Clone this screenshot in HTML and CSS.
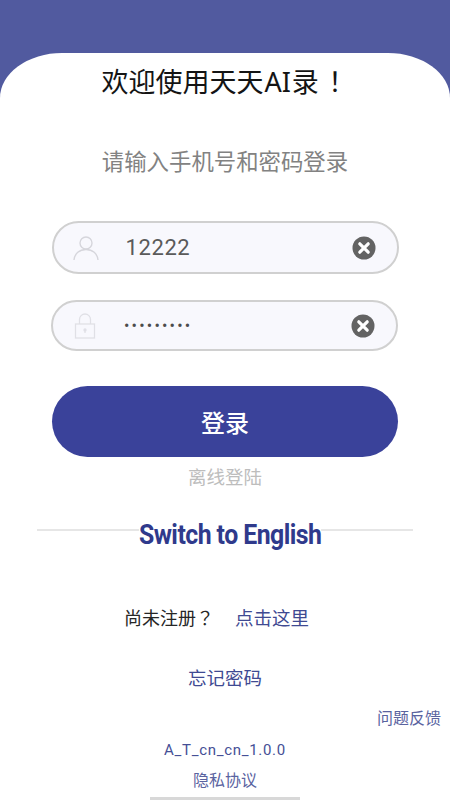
FILE: index.html
```html
<!DOCTYPE html>
<html lang="zh">
<head>
<meta charset="utf-8">
<title>天天AI录</title>
<link rel="stylesheet" href="styles.css">
</head>
<body>
<div class="screen">
  <main class="sheet">
    <h1 class="title">欢迎使用天天<span class="latin">AI</span>录<span class="fw">！</span></h1>
    <p class="subtitle">请输入手机号和密码登录</p>

    <div class="field field-user">
      <svg class="field-icon" viewBox="0 0 26 26" width="26" height="26" fill="none" stroke="#d6d6dc" stroke-width="1.4">
        <circle cx="13" cy="8" r="6"/>
        <path d="M1 25c.6-6.500 5.500-10.500 12-10.500S24.400 18.500 25 25"/>
      </svg>
      <span class="field-value">12222</span>
      <svg class="clear" viewBox="0 0 24 24" width="24" height="24">
        <circle cx="12" cy="12" r="11.500" fill="#636363"/>
        <path d="M7.800 7.800l8.400 8.400M16.200 7.800l-8.400 8.400" stroke="#fff" stroke-width="3.200" stroke-linecap="round"/>
      </svg>
    </div>

    <div class="field field-pass">
      <svg class="field-icon" viewBox="0 0 22 26" width="22" height="26" fill="none" stroke="#e0e0e6" stroke-width="1.300">
        <rect x="1.500" y="11" width="19" height="14"/>
        <path d="M5.500 11V6.500a5.500 5.500 0 0 1 11 0V11"/>
        <circle cx="11" cy="17" r="1" fill="#e0e0e6"/>
        <path d="M11 17v3"/>
      </svg>
      <span class="field-value dots">•••••••••</span>
      <svg class="clear" viewBox="0 0 24 24" width="24" height="24">
        <circle cx="12" cy="12" r="11.500" fill="#636363"/>
        <path d="M7.800 7.800l8.400 8.400M16.200 7.800l-8.400 8.400" stroke="#fff" stroke-width="3.200" stroke-linecap="round"/>
      </svg>
    </div>

    <button class="login" type="button">登录</button>
    <div class="offline">离线登陆</div>

    <div class="switch-row">
      <span class="switch">Switch to English</span>
    </div>

    <div class="register"><span class="register-q">尚未注册<span class="fw">？</span></span><a class="register-link">点击这里</a></div>
    <div class="forgot">忘记密码</div>
    <div class="feedback">问题反馈</div>
    <div class="version">A_T_cn_cn_1.0.0</div>
    <div class="privacy">隐私协议</div>
    <div class="home-bar"></div>
  </main>
</div>
</body>
</html>
```

FILE: styles.css
```css
* { box-sizing: border-box; }
html, body { margin: 0; padding: 0; height: 100%; }
body {
  font-family: "Noto Sans CJK SC", "Noto Sans", sans-serif;
  overflow: hidden;
}
.screen {
  width: 450px;
  height: 800px;
  padding-top: 53px;
  background: #515a9f;
}
.sheet {
  height: 747px;
  background: #fff;
  border-radius: 62px 62px 0 0 / 45px 45px 0 0;
  display: flex;
  flex-direction: column;
  align-items: center;
}
.title {
  margin: 9px 0 0 0;
  height: 38px;
  font-size: 27px;
  line-height: 38px;
  font-weight: 400;
  color: #141414;
  white-space: nowrap;
}
.latin { margin: 0 1px; font-family: "Noto Sans", sans-serif; }
.fw {
  display: inline-block;
  width: 1em;
  line-height: 1;
  text-align: center;
  margin-left: 0.1em;
  font-family: "Noto Sans CJK TC", sans-serif;
}
.subtitle {
  margin: 44px 0 0 0;
  font-size: 22.400px;
  line-height: 32px;
  color: #828282;
}
.field {
  width: 347px;
  border: 2px solid #d0d0d0;
  border-radius: 27px;
  background: #f8f8fd;
  display: flex;
  align-items: center;
  flex: none;
}
.field-user { height: 53px; margin: 45px 0 0 0; padding: 0 21px 0 19px; }
.field-pass { height: 51px; margin: 26px 0 0 -1px; padding: 0 21px 0 21px; }
.field-icon { flex: none; }
.field-value {
  flex: 1;
  font-family: Roboto, sans-serif;
  font-size: 22px;
  color: #5a5a5a;
  letter-spacing: 0.600px;
}
.field-user .field-value { padding-left: 27px; }
.field-pass .field-value {
  padding-left: 28px;
  font-size: 16px;
  letter-spacing: 2.200px;
  color: #4c4c4c;
}
.clear { flex: none; }
.login {
  width: 346px;
  height: 71px;
  margin: 35px 0 0 0;
  flex: none;
  border: 0;
  border-radius: 36px;
  background: #3a429a;
  color: #fff;
  font-family: inherit;
  font-size: 24px;
  font-weight: 500;
  padding: 0;
}
.offline {
  margin-top: 6px;
  font-size: 18.500px;
  line-height: 27px;
  color: #bdbdbd;
}
.switch-row {
  width: 376px;
  height: 40px;
  margin-top: 26px;
  display: flex;
  justify-content: center;
  align-items: center;
  background: linear-gradient(#e6e6e6, #e6e6e6) center 13px / 100% 2px no-repeat;
}
.switch {
  font-family: Roboto, sans-serif;
  font-weight: 700;
  font-size: 27px;
  line-height: 40px;
  color: #2f3a8c;
  letter-spacing: -0.600px;
  background: #fff;
  margin-left: 10px;
  transform: translateY(-1px) scaleX(0.92);
}
.register {
  margin: 47px 0 0 -17px;
  height: 28px;
  display: flex;
  gap: 21px;
  font-size: 18px;
  line-height: 28px;
}
.register-q { color: #262626; }
.register-q .fw { margin-left: 0; }
.register-link { color: #3f4a92; font-size: 18.500px; }
.forgot {
  margin-top: 32px;
  font-size: 18.500px;
  line-height: 28px;
  color: #3f4a92;
}
.feedback {
  align-self: flex-end;
  margin: 14px 9px 0 0;
  font-size: 16px;
  line-height: 24px;
  color: #5a639f;
}
.version {
  margin: 10px 0 0 0;
  font-family: Roboto, sans-serif;
  font-size: 15px;
  line-height: 22px;
  letter-spacing: 0.700px;
  color: #454f96;
}
.privacy {
  margin-top: 6px;
  font-size: 16px;
  line-height: 24px;
  color: #5a639f;
}
.home-bar {
  width: 150px;
  height: 3px;
  margin-top: auto;
  background: #d8d8d8;
}
```
